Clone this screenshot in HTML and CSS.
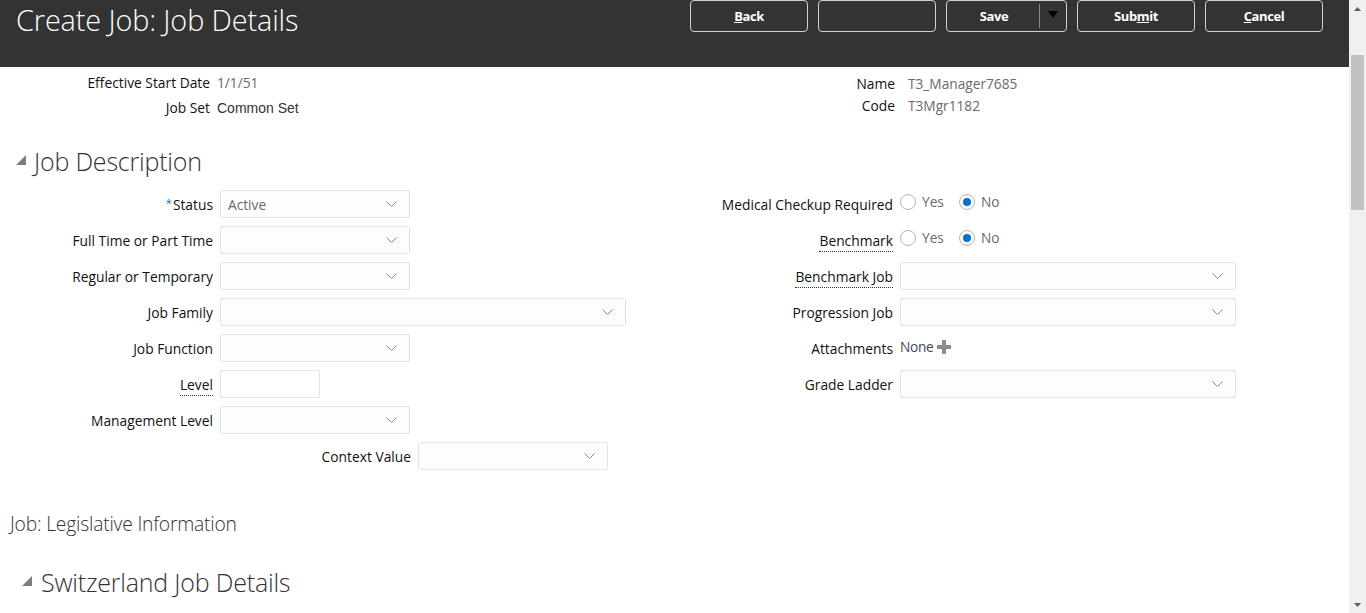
FILE: index.html
```html
<!DOCTYPE html>
<html>
<head>
<meta charset="utf-8">
<link rel="stylesheet" href="styles.css">
</head>
<body>
<div class="page">
  <div class="main">
    <header class="header">
      <h1 class="title">Create Job: Job Details</h1>
      <div class="actions">
        <button class="btn"><u>B</u>ack</button>
        <button class="btn"></button>
        <div class="btn split"><span class="split-label">Save</span><span class="split-arrow"><svg width="10" height="7" viewBox="0 0 10 7"><path d="M0 0H10L5 7Z" fill="#000"/></svg></span></div>
        <button class="btn">Sub<u>m</u>it</button>
        <button class="btn"><u>C</u>ancel</button>
      </div>
    </header>

    <section class="info">
      <div class="info-col left">
        <div class="info-row"><span class="lbl">Effective Start Date</span><span class="val gray">1/1/51</span></div>
        <div class="info-row"><span class="lbl">Job Set</span><span class="val arial">Common Set</span></div>
      </div>
      <div class="info-col right">
        <div class="info-row"><span class="lbl">Name</span><span class="val gray">T3_Manager7685</span></div>
        <div class="info-row"><span class="lbl">Code</span><span class="val gray">T3Mgr1182</span></div>
      </div>
    </section>

    <h2 class="section-head first"><span class="tri"></span>Job Description</h2>

    <section class="form">
      <div class="form-col fl">
        <div class="row"><label class="lbl"><span class="req">*</span>Status</label><div class="select w190"><span class="sel-text">Active</span><svg class="chev" width="11" height="6" viewBox="0 0 11 6"><path d="M0.5 0.5L5.5 5.5L10.5 0.5" fill="none" stroke="#8a8a8a"/></svg></div></div>
        <div class="row"><label class="lbl">Full Time or Part Time</label><div class="select w190"><span class="sel-text"></span><svg class="chev" width="11" height="6" viewBox="0 0 11 6"><path d="M0.5 0.5L5.5 5.5L10.5 0.5" fill="none" stroke="#8a8a8a"/></svg></div></div>
        <div class="row"><label class="lbl">Regular or Temporary</label><div class="select w190"><span class="sel-text"></span><svg class="chev" width="11" height="6" viewBox="0 0 11 6"><path d="M0.5 0.5L5.5 5.5L10.5 0.5" fill="none" stroke="#8a8a8a"/></svg></div></div>
        <div class="row"><label class="lbl">Job Family</label><div class="select w406"><span class="sel-text"></span><svg class="chev" width="11" height="6" viewBox="0 0 11 6"><path d="M0.5 0.5L5.5 5.5L10.5 0.5" fill="none" stroke="#8a8a8a"/></svg></div></div>
        <div class="row"><label class="lbl">Job Function</label><div class="select w190"><span class="sel-text"></span><svg class="chev" width="11" height="6" viewBox="0 0 11 6"><path d="M0.5 0.5L5.5 5.5L10.5 0.5" fill="none" stroke="#8a8a8a"/></svg></div></div>
        <div class="row"><label class="lbl"><span class="dotted">Level</span></label><div class="input w100"></div></div>
        <div class="row"><label class="lbl">Management Level</label><div class="select w190"><span class="sel-text"></span><svg class="chev" width="11" height="6" viewBox="0 0 11 6"><path d="M0.5 0.5L5.5 5.5L10.5 0.5" fill="none" stroke="#8a8a8a"/></svg></div></div>
        <div class="row ctx"><label class="lbl">Context Value</label><div class="select w190"><span class="sel-text"></span><svg class="chev" width="11" height="6" viewBox="0 0 11 6"><path d="M0.5 0.5L5.5 5.5L10.5 0.5" fill="none" stroke="#8a8a8a"/></svg></div></div>
      </div>
      <div class="form-col fr">
        <div class="row"><label class="lbl">Medical Checkup Required</label>
          <div class="radios"><span class="radio"></span><span class="rtext">Yes</span><span class="radio on"></span><span class="rtext">No</span></div></div>
        <div class="row"><label class="lbl"><span class="dotted">Benchmark</span></label>
          <div class="radios"><span class="radio"></span><span class="rtext">Yes</span><span class="radio on"></span><span class="rtext">No</span></div></div>
        <div class="row"><label class="lbl"><span class="dotted">Benchmark Job</span></label><div class="select w336"><span class="sel-text"></span><svg class="chev" width="11" height="6" viewBox="0 0 11 6"><path d="M0.5 0.5L5.5 5.5L10.5 0.5" fill="none" stroke="#8a8a8a"/></svg></div></div>
        <div class="row"><label class="lbl">Progression Job</label><div class="select w336"><span class="sel-text"></span><svg class="chev" width="11" height="6" viewBox="0 0 11 6"><path d="M0.5 0.5L5.5 5.5L10.5 0.5" fill="none" stroke="#8a8a8a"/></svg></div></div>
        <div class="row"><label class="lbl">Attachments</label><div class="attach"><span class="none">None</span><svg width="14" height="14" viewBox="0 0 14 14"><path d="M5 0H9V5H14V9H9V14H5V9H0V5H5Z" fill="#8c8c8c"/></svg></div></div>
        <div class="row"><label class="lbl">Grade Ladder</label><div class="select w336"><span class="sel-text"></span><svg class="chev" width="11" height="6" viewBox="0 0 11 6"><path d="M0.5 0.5L5.5 5.5L10.5 0.5" fill="none" stroke="#8a8a8a"/></svg></div></div>
      </div>
    </section>

    <h3 class="sub-head">Job: Legislative Information</h3>
    <h2 class="section-head swiss"><span class="tri"></span>Switzerland Job Details</h2>
  </div>

  <div class="scrollbar">
    <div class="sb-arrow"><svg width="7" height="4" viewBox="0 0 7 4"><path d="M0 4L3.5 0L7 4Z" fill="#606060"/></svg></div>
    <div class="sb-thumb"></div>
    <div class="sb-space"></div>
    <div class="sb-arrow"><svg width="7" height="4" viewBox="0 0 7 4"><path d="M0 0L3.5 4L7 0Z" fill="#606060"/></svg></div>
  </div>
</div>
</body>
</html>
```

FILE: styles.css
```css
* { box-sizing: border-box; }
html, body {
  margin: 0;
  padding: 0;
  width: 1366px;
  height: 613px;
  overflow: hidden;
  background: #fff;
  font-family: "Open Sans", "Noto Sans", sans-serif;
  color: #333;
}
.page {
  display: flex;
  height: 613px;
}
.main {
  flex: 1;
  min-width: 0;
}

/* Header */
.header {
  height: 67px;
  background: #333333;
  display: flex;
  justify-content: space-between;
  align-items: flex-start;
  padding: 0 26px 0 16px;
}
.title {
  margin: 0;
  font-weight: 300;
  font-size: 28.8px;
  line-height: 39px;
  color: #fff;
  letter-spacing: -0.1px;
}
.actions {
  display: flex;
  gap: 10px;
}
.btn {
  width: 118px;
  height: 32px;
  border: 1px solid #d0d0d0;
  border-radius: 4px;
  background: #333;
  color: #fff;
  font-family: "Open Sans", sans-serif;
  font-weight: 700;
  font-size: 13px;
  letter-spacing: -0.4px;
  padding: 0;
  display: flex;
  align-items: center;
  justify-content: center;
}
.btn.split {
  width: 121px;
  justify-content: flex-start;
}
.split-label {
  width: 92px;
  text-align: center;
  padding-left: 2px;
}
.split-arrow {
  height: 24px;
  border-left: 1px solid #8a8a8a;
  flex: 1;
  display: flex;
  justify-content: center;
  padding-top: 7px;
}
.split-arrow svg path { fill: #000; }

/* Info */
.info {
  display: flex;
  padding-top: 3px;
  height: 79px;
}
.info-col { display: flex; flex-direction: column; }
.info-col.left { width: 700px; }
.info-col.left .info-row { height: 25px; }
.info-col.left .lbl { width: 210px; }
.info-col.left .val { margin-left: 7px; }
.info-col.right { padding-top: 2px; }
.info-col.right .info-row { height: 22px; }
.info-col.right .lbl { width: 195px; }
.info-col.right .val { margin-left: 13px; }
.info-row {
  display: flex;
  align-items: center;
  font-size: 13.7px;
}
.lbl {
  text-align: right;
  color: #111;
  font-size: 13.8px;
  white-space: nowrap;
}
.val { color: #333; }
.val.gray { color: #6a6a6a; }
.val.arial { font-family: "Liberation Sans", Arial, sans-serif; font-size: 14px; color: #333; }

/* Section headings */
.section-head {
  margin: 0;
  font-weight: 300;
  font-size: 25px;
  color: #333;
  display: flex;
  align-items: center;
  line-height: 30px;
  letter-spacing: -0.2px;
}
.section-head.first { padding-left: 16px; height: 30px; }
.tri {
  width: 0;
  height: 0;
  border-left: 10px solid transparent;
  border-bottom: 10px solid #7d7d7d;
  margin-right: 8px;
  margin-top: -2px;
}
.section-head.swiss { padding-left: 22px; margin-top: 31px; }
.section-head.swiss .tri { margin-right: 9px; }

.sub-head {
  margin: 42px 0 0 10px;
  font-weight: 300;
  font-size: 19.3px;
  line-height: 24px;
  color: #333;
  letter-spacing: -0.2px;
}

/* Form */
.form {
  display: flex;
  margin-top: 14px;
}
.form-col {
  display: flex;
  flex-direction: column;
  gap: 8px;
}
.fl { width: 700px; }
.fl .lbl { width: 213px; }
.fr .lbl { width: 193px; }
.row {
  display: flex;
  align-items: center;
  height: 28px;
  gap: 7px;
}
.row.ctx { padding-left: 198px; }
.req { color: #0572ce; font-size: 11px; vertical-align: 3px; margin-right: 1px; }
.dotted { border-bottom: 1px dotted #333; padding-bottom: 1px; }

.select, .input {
  height: 28px;
  border: 1px solid #dfe4e7;
  border-radius: 2px;
  background: #fcfdfe;
  display: flex;
  align-items: center;
  justify-content: space-between;
  padding: 0 12px 0 7px;
}
.w190 { width: 190px; }
.w406 { width: 406px; }
.w336 { width: 336px; }
.w100 { width: 100px; background: #fff; }
.sel-text { color: #6a6a6a; font-size: 13.7px; }
.chev { flex: none; }

.radios {
  display: flex;
  align-items: center;
  margin-top: -5px;
}
.radio {
  width: 16px;
  height: 16px;
  border: 1px solid #b5b5b5;
  border-radius: 50%;
  background: #fff;
  position: relative;
}
.radio.on::after {
  content: "";
  position: absolute;
  left: 3px;
  top: 3px;
  width: 8px;
  height: 8px;
  border-radius: 50%;
  background: #0572ce;
}
.rtext {
  color: #6a6a6a;
  font-size: 13.7px;
  margin-left: 6px;
  margin-right: 15px;
}
.attach {
  display: flex;
  align-items: center;
  gap: 4px;
  margin-top: -3px;
}
.none { color: #3c4a58; font-size: 13.7px; letter-spacing: -0.3px; }

/* Scrollbar */
.scrollbar {
  width: 17px;
  background: #f0f0f0;
  display: flex;
  flex-direction: column;
  align-items: center;
}
.sb-arrow {
  height: 17px;
  display: flex;
  align-items: center;
  justify-content: center;
}
.sb-thumb {
  width: 13px;
  height: 155px;
  margin-top: 38px;
  background: #c1c1c1;
}
.sb-space { flex: 1; }
```
